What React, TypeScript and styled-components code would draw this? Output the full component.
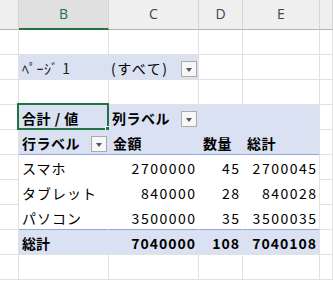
import React from 'react';
import styled, { createGlobalStyle, css } from 'styled-components';

const GRID = '#e1e1e1';
const BAND = '#d9e1f2';
const RULE = '#8ea9db';
const GREEN = '#217346';

const GlobalStyle = createGlobalStyle`
  html, body { margin: 0; padding: 0; background: #fff; }
  body { font-family: "Noto Sans CJK JP", "Noto Sans", sans-serif; color: #000; }
`;

const Sheet = styled.div`
  display: grid;
  grid-template-columns: 19px 90px 90px 44px 77px 13px;
  grid-template-rows: 30px repeat(10, 25px);
  width: 333px;
  height: 281px;
  overflow: hidden;
`;

const ColHead = styled.div<{ $active?: boolean }>`
  box-sizing: border-box;
  display: flex;
  align-items: center;
  justify-content: center;
  font-family: "Open Sans", "Liberation Sans", sans-serif;
  font-size: 14px;
  padding-bottom: 2px;
  color: #444;
  background: #efefef;
  border-right: 1px solid #d4d4d4;
  border-bottom: 1px solid #b4b4b4;
  ${p => p.$active && css`
    background: #e0e0e0;
    color: ${GREEN};
    border-bottom: 2px solid ${GREEN};
  `}
`;

const Cell = styled.div<{ $align?: 'left' | 'right'; $bold?: boolean; $last?: boolean }>`
  box-sizing: border-box;
  position: relative;
  display: flex;
  align-items: center;
  justify-content: ${p => (p.$align === 'right' ? 'flex-end' : 'space-between')};
  padding: 2px 3px 0 3px;
  font-size: 14px;
  font-weight: ${p => (p.$bold ? 700 : 400)};
  white-space: nowrap;
  border-right: 1px solid ${GRID};
  border-bottom: 1px solid ${GRID};
`;

const PageCell = styled(Cell)`
  background: ${BAND};
  border-right-color: ${p => (p.$last ? GRID : BAND)};
  padding-right: 1px;
`;

const LabelCell = styled(Cell)<{ $rule?: boolean; $indent?: boolean }>`
  background: ${BAND};
  border-right-color: ${p => (p.$last ? GRID : BAND)};
  border-bottom-color: ${p => (p.$rule ? RULE : BAND)};
  padding-right: 1px;
  padding-left: ${p => (p.$indent ? '4px' : '3px')};
  letter-spacing: 0.5px;
`;

const BodyCell = styled(Cell)<{ $rule?: boolean }>`
  background: #fff;
  border-right-color: ${p => (p.$last ? GRID : '#fff')};
  border-bottom-color: ${p => (p.$rule ? RULE : '#fff')};
`;

const TotalCell = styled(Cell)`
  background: ${BAND};
  border-right-color: ${p => (p.$last ? GRID : BAND)};
`;

const Num = styled.span<{ $bold?: boolean }>`
  letter-spacing: ${p => (p.$bold ? '1px' : '1.5px')};
  margin-right: ${p => (p.$bold ? '-1px' : '-1.5px')};
`;

const Kana = styled.span`
  letter-spacing: 1px;
`;

const PageLabel = styled.span`
  font-size: 14px;
  color: #222;
  letter-spacing: 0.5px;
`;

const PageValue = styled.span`
  margin-left: -1px;
  letter-spacing: 1.5px;
`;

const DropButton = styled.span`
  box-sizing: border-box;
  width: 16px;
  height: 16px;
  margin-top: 2px;
  border: 1px solid #ababab;
  background: #f7f7f7;
  display: flex;
  align-items: center;
  justify-content: center;
  flex-shrink: 0;
  &::after {
    content: '';
    border-left: 3.5px solid transparent;
    border-right: 3.5px solid transparent;
    border-top: 4px solid #555;
    margin-top: 1px;
  }
`;

const Selection = styled.div`
  position: absolute;
  top: -2px;
  left: -2px;
  right: -1px;
  bottom: -1px;
  border: 2px solid ${GREEN};
  pointer-events: none;
  &::after {
    content: '';
    position: absolute;
    right: -5px;
    bottom: -5px;
    width: 5px;
    height: 5px;
    background: ${GREEN};
    border: 1px solid #fff;
  }
`;

const rows = [
  { label: 'スマホ', amount: '2700000', qty: '45', total: '2700045' },
  { label: 'タブレット', amount: '840000', qty: '28', total: '840028' },
  { label: 'パソコン', amount: '3500000', qty: '35', total: '3500035' },
];

const Blank = () => (
  <>
    <Cell />
    <Cell />
    <Cell />
    <Cell />
    <Cell />
    <Cell />
  </>
);

export default function App() {
  return (
    <>
      <GlobalStyle />
      <Sheet>
        <ColHead />
        <ColHead $active>B</ColHead>
        <ColHead>C</ColHead>
        <ColHead>D</ColHead>
        <ColHead>E</ColHead>
        <ColHead />

        <Blank />

        <Cell />
        <PageCell><PageLabel>ﾍﾟｰｼﾞ 1</PageLabel></PageCell>
        <PageCell $last>
          <PageValue>(すべて)</PageValue>
          <DropButton />
        </PageCell>
        <Cell />
        <Cell />
        <Cell />

        <Blank />

        <Cell />
        <LabelCell $bold>
          合計 / 値
          <Selection />
        </LabelCell>
        <LabelCell $bold>
          <span>列ラベル</span>
          <DropButton />
        </LabelCell>
        <LabelCell />
        <LabelCell $last />
        <Cell />

        <Cell />
        <LabelCell $bold $rule>
          <span>行ラベル</span>
          <DropButton />
        </LabelCell>
        <LabelCell $bold $rule $indent>金額</LabelCell>
        <LabelCell $bold $rule $indent>数量</LabelCell>
        <LabelCell $bold $rule $indent $last>総計</LabelCell>
        <Cell />

        {rows.map((r, i) => (
          <React.Fragment key={r.label}>
            <Cell />
            <BodyCell $rule={i === rows.length - 1}><Kana>{r.label}</Kana></BodyCell>
            <BodyCell $rule={i === rows.length - 1} $align="right"><Num>{r.amount}</Num></BodyCell>
            <BodyCell $rule={i === rows.length - 1} $align="right"><Num>{r.qty}</Num></BodyCell>
            <BodyCell $rule={i === rows.length - 1} $align="right" $last><Num>{r.total}</Num></BodyCell>
            <Cell />
          </React.Fragment>
        ))}

        <Cell />
        <TotalCell $bold>総計</TotalCell>
        <TotalCell $bold $align="right"><Num $bold>7040000</Num></TotalCell>
        <TotalCell $bold $align="right"><Num $bold>108</Num></TotalCell>
        <TotalCell $bold $align="right" $last><Num $bold>7040108</Num></TotalCell>
        <Cell />

        <Blank />
      </Sheet>
    </>
  );
}
